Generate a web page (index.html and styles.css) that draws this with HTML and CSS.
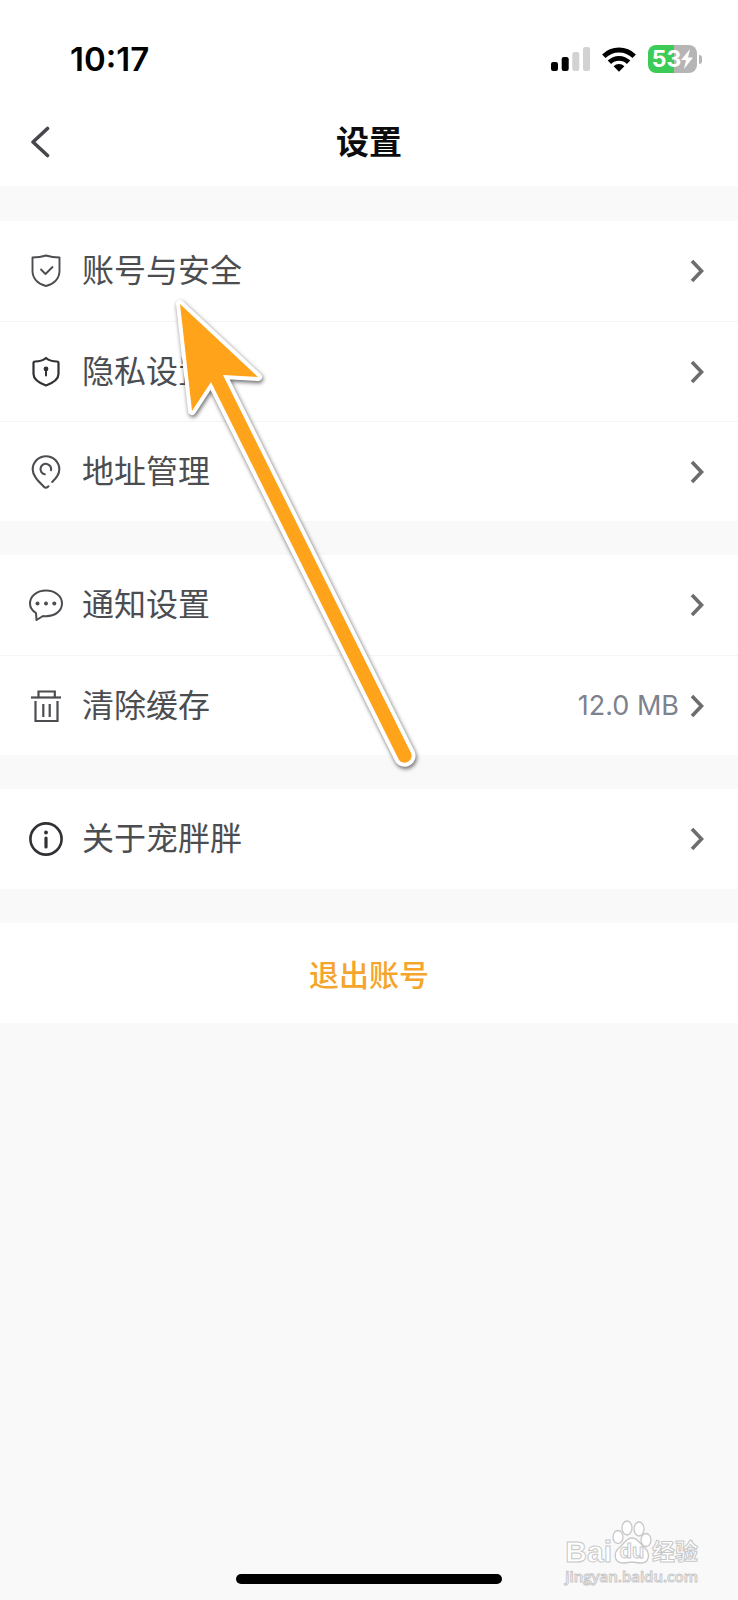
FILE: index.html
```html
<!DOCTYPE html>
<html lang="zh-CN">
<head>
<meta charset="utf-8">
<meta name="viewport" content="width=device-width, initial-scale=1">
<title>设置</title>
<link rel="stylesheet" href="styles.css">
</head>
<body>
<svg width="0" height="0" class="defs" aria-hidden="true">
  <symbol id="chevron" viewBox="0 0 16 24"><path d="M3 2 L12.500 12 L3 22" fill="none" stroke="#6d6d6f" stroke-width="3.600"/></symbol>
</svg>
<div class="screen">
  <header class="top">
    <div class="status">
      <time class="clock">10:17</time>
      <div class="indicators">
        <svg width="39" height="25" viewBox="0 0 39 25" aria-label="信号">
          <rect x="0" y="15" width="7" height="9" rx="2.200"/>
          <rect x="10.700" y="10" width="7" height="14" rx="2.200"/>
          <rect x="21.300" y="5" width="7" height="19" rx="2.200" fill="#d2d2d2"/>
          <rect x="32" y="0" width="7" height="24" rx="2.200" fill="#d2d2d2"/>
        </svg>
        <svg width="34" height="25" viewBox="0 0 34 25" aria-label="无线网络">
          <g fill="none" stroke="#000" stroke-width="4.800">
            <path d="M1.800 9.300 A21.500 21.500 0 0 1 32.200 9.300"/>
            <path d="M7.400 15.300 A13.600 13.600 0 0 1 26.600 15.300"/>
          </g>
          <path d="M17 24.800 L11.600 19.300 A7.600 7.600 0 0 1 22.400 19.300 Z"/>
        </svg>
        <div class="battery">
          <span class="level">53</span>
          <svg width="12" height="20" viewBox="0 0 12 20" aria-hidden="true"><path d="M9 0 L0 11 H5 L3 20 L12 8.500 H7 Z" fill="#fff"/></svg>
        </div>
      </div>
    </div>
    <div class="navbar">
      <button class="back" type="button" aria-label="返回">
        <svg width="20" height="32" viewBox="0 0 20 32"><path d="M17.500 2.500 L3 16 L17.500 29.500" fill="none" stroke="#46464c" stroke-width="3.600" stroke-linecap="round" stroke-linejoin="round"/></svg>
      </button>
      <h1 class="title">设置</h1>
    </div>
  </header>

  <main class="groups">
    <section class="group">
      <a class="row" href="#account">
        <svg class="icon" viewBox="0 0 36 36"><g fill="none" stroke="#4b4d51" stroke-width="1.900" stroke-linejoin="round"><path d="M4.500 4.500 Q12 4.500 18 2.500 Q24 4.500 31.500 4.500 V18 C31.500 25.500 26 31 18 33 C10 31 4.500 25.500 4.500 18 Z"/><path d="M12.500 16 L17.500 21 L25 13.500"/></g></svg>
        <span class="label">账号与安全</span>
        <svg class="chevron"><use href="#chevron"/></svg>
      </a>
      <a class="row" href="#privacy">
        <svg class="icon" viewBox="0 0 36 36"><path d="M18 4 C21 6.500 25 7.500 29 7.500 Q30.500 7.500 30.500 9 V20 C30.500 25 26 28.500 18 31.500 C10 28.500 5.500 25 5.500 20 V9 Q5.500 7.500 7 7.500 C11 7.500 15 6.500 18 4 Z" fill="none" stroke="#303135" stroke-width="2.200" stroke-linejoin="round"/><circle cx="18" cy="15" r="2.400" fill="#303135"/><path d="M18 15 V21.500" stroke="#303135" stroke-width="2" stroke-linecap="round"/></svg>
        <span class="label">隐私设置</span>
        <svg class="chevron"><use href="#chevron"/></svg>
      </a>
      <a class="row" href="#address">
        <svg class="icon" viewBox="0 0 36 36"><g fill="none" stroke="#4b4d51" stroke-width="2.100" stroke-linecap="round" stroke-linejoin="round"><path d="M24.200 28 C29 23.500 31.300 19.500 31.300 15.500 A13.300 13.300 0 0 0 4.700 15.500 C4.700 22 10 27 15.700 32.500 Q18 35 20.500 32.300"/><path d="M16.800 20.300 A5.300 5.300 0 1 1 23 16.200"/></g></svg>
        <span class="label">地址管理</span>
        <svg class="chevron"><use href="#chevron"/></svg>
      </a>
    </section>

    <section class="group">
      <a class="row" href="#notice">
        <svg class="icon" viewBox="0 0 36 36"><path d="M8 26 C3.800 23.500 2 20 2 16.500 C2 9 9 3.500 18 3.500 S34 9 34 16.500 S27 29.200 18 29.200 Q16.500 29.200 15 29 L8.500 33 Z" fill="none" stroke="#4b4d51" stroke-width="2" stroke-linejoin="round"/><g fill="#4b4d51"><circle cx="9.500" cy="16.500" r="2"/><circle cx="18" cy="16.500" r="2"/><circle cx="26.300" cy="16.500" r="2"/></g></svg>
        <span class="label">通知设置</span>
        <svg class="chevron"><use href="#chevron"/></svg>
      </a>
      <a class="row" href="#cache">
        <svg class="icon" viewBox="0 0 36 36"><g fill="none" stroke="#4b4d51" stroke-width="2.200"><path d="M3 9.500 H33"/><path d="M10.500 9.500 V3.500 H26.800 V9.500"/><path d="M7.500 13 V33 H29.500 V13"/><path d="M15.300 16 V29 M21.700 16 V29"/></g></svg>
        <span class="label">清除缓存</span>
        <span class="value">12.0 MB</span>
        <svg class="chevron"><use href="#chevron"/></svg>
      </a>
    </section>

    <section class="group">
      <a class="row" href="#about">
        <svg class="icon" viewBox="0 0 36 36"><circle cx="18" cy="18" r="15.600" fill="none" stroke="#303135" stroke-width="2.600"/><circle cx="18" cy="11.500" r="1.900" fill="#303135"/><path d="M18 17 V26" stroke="#303135" stroke-width="3.200" stroke-linecap="round"/></svg>
        <span class="label">关于宠胖胖</span>
        <svg class="chevron"><use href="#chevron"/></svg>
      </a>
    </section>

    <section class="group">
      <button class="logout" type="button">退出账号</button>
    </section>
  </main>

  <svg class="pointer" width="260" height="490" viewBox="0 0 260 490" aria-hidden="true">
    <path d="M20 24 L98 97 L63 95 L251 473 A7 7 0 0 1 239 480 L51 102 L32 131 Z" fill="#ffa31a" stroke="#fff" stroke-width="8" stroke-linejoin="round" paint-order="stroke"/>
  </svg>

  <div class="watermark" aria-label="Baidu 经验">
    <div class="brand">
      <span class="latin">Bai</span>
      <span class="paw">
        <svg width="40" height="44" viewBox="0 0 40 44" aria-hidden="true"><g fill="#fff" stroke="#c8c8c8" stroke-width="1.300"><ellipse cx="6" cy="17" rx="5" ry="6.500"/><ellipse cx="15" cy="8" rx="5" ry="7"/><ellipse cx="27" cy="9" rx="5" ry="7"/><ellipse cx="34" cy="20" rx="5" ry="6.500"/><path d="M20 18 C14 18 12 24 7 28 C1 33 2 43 11 43 C15 43 16 42 20 42 S25 43 29 43 C38 43 38 33 33 28 C28 24 26 18 20 18 Z"/></g></svg>
        <span class="du">du</span>
      </span>
      <span class="han">经验</span>
    </div>
    <div class="site">jingyan.baidu.com</div>
  </div>
  <div class="home-bar"></div>
</div>
</body>
</html>
```
FILE: styles.css
```css
* {
  box-sizing: border-box;
}

body {
  margin: 0;
  background: #f9f9f9;
  color: #4b4d51;
  font-family: "Inter", "Noto Sans CJK SC", sans-serif;
}

.defs {
  position: absolute;
}

.screen {
  position: relative;
  display: flex;
  flex-direction: column;
  min-height: 100vh;
}

.top {
  background: #fff;
}

.status {
  display: flex;
  align-items: center;
  justify-content: space-between;
  height: 96px;
  padding: 22px 36px 0 70px;
}

.clock {
  color: #000;
  font-size: 33px;
  font-weight: 600;
  line-height: 40px;
}

.indicators {
  display: flex;
  align-items: center;
  gap: 12px;
}

.battery {
  position: relative;
  display: flex;
  align-items: center;
  justify-content: center;
  width: 49px;
  height: 28px;
  margin-right: 5px;
  border-radius: 8px;
  background: linear-gradient(90deg, #3ccb57 53%, #b5b5b5 53%);
}

.battery::after {
  content: "";
  position: absolute;
  left: 51px;
  width: 3px;
  height: 9px;
  border-radius: 0 4px 4px 0;
  background: #b5b5b5;
}

.level {
  color: #fff;
  font-size: 23px;
  font-weight: 700;
  line-height: 28px;
}

.navbar {
  display: grid;
  grid-template-columns: 1fr auto 1fr;
  align-items: center;
  height: 90px;
  padding: 2px 30px 0;
}

.back {
  justify-self: start;
  display: flex;
  padding: 0;
  border: 0;
  background: none;
}

.title {
  margin: 0;
  color: #0c0c0e;
  font-size: 33px;
  font-weight: 700;
  line-height: 48px;
}

.groups {
  display: flex;
  flex-direction: column;
  gap: 34px;
  padding-top: 35px;
}

.group {
  background: #fff;
}

.row {
  display: flex;
  align-items: center;
  height: 100px;
  padding: 0 33px 0 28px;
  color: inherit;
  text-decoration: none;
}

.row + .row {
  border-top: 1px solid #f5f5f5;
}

.icon {
  flex: none;
  width: 36px;
  height: 36px;
  margin-right: 18px;
}

.label {
  flex: 1;
  font-size: 32px;
  line-height: 48px;
}

.value {
  margin-right: 10px;
  color: #7c828e;
  font-size: 27px;
  line-height: 40px;
}

.chevron {
  flex: none;
  width: 16px;
  height: 24px;
}

.logout {
  width: 100%;
  height: 100px;
  border: 0;
  background: none;
  color: #f5a52c;
  font-family: inherit;
  font-size: 30px;
  font-weight: 500;
}

.pointer {
  position: absolute;
  top: 280px;
  left: 160px;
  pointer-events: none;
  filter: drop-shadow(1px 2px 2px rgba(0, 0, 0, 0.6));
}

.watermark {
  position: absolute;
  right: 40px;
  bottom: 12px;
  color: #fff;
  -webkit-text-stroke: 1px #c8c8c8;
}

.brand {
  display: flex;
  align-items: flex-end;
  height: 44px;
}

.latin {
  font-family: "Liberation Sans", sans-serif;
  font-size: 30px;
  font-weight: 700;
  line-height: 24px;
}

.paw {
  position: relative;
  display: flex;
}

.du {
  position: absolute;
  bottom: 3px;
  left: 0;
  width: 100%;
  font-family: "Liberation Sans", sans-serif;
  font-size: 20px;
  font-weight: 700;
  line-height: 20px;
  text-align: center;
}

.han {
  font-size: 23px;
  font-weight: 700;
  line-height: 24px;
}

.site {
  font-family: "Open Sans", sans-serif;
  font-size: 15px;
  font-weight: 600;
  line-height: 24px;
  text-align: center;
}

.home-bar {
  width: 36%;
  height: 10px;
  margin: auto auto 16px;
  border-radius: 5px;
  background: #000;
}
```
